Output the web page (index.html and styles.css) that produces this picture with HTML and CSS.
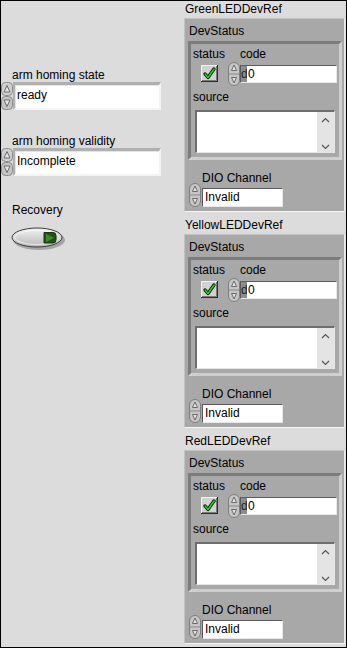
FILE: index.html
```html
<!DOCTYPE html>
<html lang="en">
<head>
<meta charset="UTF-8">
<meta name="viewport" content="width=device-width, initial-scale=1.0">
<title>Front Panel</title>
<link rel="stylesheet" href="styles.css">
</head>
<body>

<div class="panel">
  <div class="left">
    <div class="ctl first">
      <div class="ctl-label">arm homing state</div>
      <div class="ring">
        <svg class="spin spin-ring" width="12" height="28" viewBox="0 0 12 28">
          <rect x="0.5" y="0.5" width="11" height="13" rx="4" fill="#cfcfcf" stroke="#8a8a8a"/>
          <rect x="0.5" y="14.5" width="11" height="13" rx="4" fill="#c4c4c4" stroke="#8a8a8a"/>
          <polygon points="6,3.5 9,10 3,10" fill="#e8e8e8" stroke="#6a6a6a"/>
          <polygon points="3,18 9,18 6,24.5" fill="#e8e8e8" stroke="#6a6a6a"/>
        </svg>
        <div class="ring-field">ready</div>
      </div>
    </div>
    <div class="ctl second">
      <div class="ctl-label">arm homing validity</div>
      <div class="ring">
        <svg class="spin spin-ring" width="12" height="28" viewBox="0 0 12 28">
          <rect x="0.5" y="0.5" width="11" height="13" rx="4" fill="#cfcfcf" stroke="#8a8a8a"/>
          <rect x="0.5" y="14.5" width="11" height="13" rx="4" fill="#c4c4c4" stroke="#8a8a8a"/>
          <polygon points="6,3.5 9,10 3,10" fill="#e8e8e8" stroke="#6a6a6a"/>
          <polygon points="3,18 9,18 6,24.5" fill="#e8e8e8" stroke="#6a6a6a"/>
        </svg>
        <div class="ring-field">Incomplete</div>
      </div>
    </div>
    <div class="ctl third">
      <div class="ctl-label">Recovery</div>
      <svg class="btn" width="56" height="26" viewBox="0 0 56 26">
        <defs>
          <linearGradient id="btnFill" x1="0" y1="0" x2="0" y2="1">
            <stop offset="0" stop-color="#f2f2f2"/>
            <stop offset="1" stop-color="#b8b8b8"/>
          </linearGradient>
        </defs>
        <ellipse cx="28" cy="14" rx="26" ry="10" fill="#a4a4a4"/>
        <ellipse cx="26" cy="11.5" rx="25" ry="9.5" fill="url(#btnFill)" stroke="#3c3c3c"/>
        <ellipse cx="26" cy="11.5" rx="22" ry="7" fill="none" stroke="#ffffff" stroke-opacity="0.6"/>
        <path d="M33 6.5 L42 6.5 Q45 6.5 45 9.5 L45 14 Q45 17 42 17 L33 17 Z" fill="#24501a" stroke="#1a3312"/>
        <polygon points="35,8 43,12 35,16" fill="#3f8a2c"/>
      </svg>
    </div>
  </div>

  <div class="right">
    <div class="devref">
      <div class="devref-title">GreenLEDDevRef</div>
      <div class="cluster">
        <div class="cluster-title">DevStatus</div>
        <div class="frame">
          <div class="status-row">
            <div class="status-col">
              <div class="sub-label">status</div>
              <svg class="check" width="17" height="17" viewBox="0 0 17 17">
                <rect x="0" y="0" width="17" height="17" fill="#2e2e2e"/>
                <rect x="0" y="0" width="16" height="16" fill="#f4f4f4"/>
                <rect x="1" y="1" width="15" height="15" fill="#7a7a7a"/>
                <rect x="1" y="1" width="14" height="14" fill="#d2d2d2"/>
                <path d="M4 9 L7 12.5 L13 4" fill="none" stroke="#000" stroke-width="3.2" stroke-linecap="round" stroke-linejoin="round"/>
                <path d="M4 9 L7 12.5 L13 4" fill="none" stroke="#19e019" stroke-width="1.6" stroke-linecap="round" stroke-linejoin="round"/>
              </svg>
            </div>
            <div class="code-col">
              <div class="sub-label code-label">code</div>
              <div class="num-row">
                <svg class="spin" width="12" height="24" viewBox="0 0 12 24">
                  <rect x="0.5" y="0.5" width="11" height="23" rx="5.5" fill="#c6c6c6" stroke="#7e7e7e"/>
                  <line x1="1" y1="12" x2="11" y2="12" stroke="#8a8a8a"/>
                  <polygon points="6,3 8.5,8.5 3.5,8.5" fill="#e6e6e6" stroke="#6a6a6a"/>
                  <polygon points="3.5,15.5 8.5,15.5 6,21" fill="#e6e6e6" stroke="#6a6a6a"/>
                </svg>
                <div class="num-field code-field"><span class="radix">d</span>0</div>
              </div>
            </div>
          </div>
          <div class="sub-label source-label">source</div>
          <div class="source-box">
            <div class="scroll">
              <svg width="9" height="6" viewBox="0 0 9 6"><polyline points="1,5 4.5,1.5 8,5" fill="none" stroke="#555" stroke-width="1.2"/></svg>
              <svg width="9" height="6" viewBox="0 0 9 6"><polyline points="1,1 4.5,4.5 8,1" fill="none" stroke="#555" stroke-width="1.2"/></svg>
            </div>
          </div>
        </div>
        <div class="dio-label">DIO Channel</div>
        <div class="dio-row">
          <svg class="spin" width="12" height="24" viewBox="0 0 12 24">
            <rect x="0.5" y="0.5" width="11" height="23" rx="5.5" fill="#c6c6c6" stroke="#7e7e7e"/>
            <line x1="1" y1="12" x2="11" y2="12" stroke="#8a8a8a"/>
            <polygon points="6,3 8.5,8.5 3.5,8.5" fill="#e6e6e6" stroke="#6a6a6a"/>
            <polygon points="3.5,15.5 8.5,15.5 6,21" fill="#e6e6e6" stroke="#6a6a6a"/>
          </svg>
          <div class="num-field dio-field">Invalid</div>
        </div>
      </div>
    </div>

    <div class="devref">
      <div class="devref-title">YellowLEDDevRef</div>
      <div class="cluster">
        <div class="cluster-title">DevStatus</div>
        <div class="frame">
          <div class="status-row">
            <div class="status-col">
              <div class="sub-label">status</div>
              <svg class="check" width="17" height="17" viewBox="0 0 17 17">
                <rect x="0" y="0" width="17" height="17" fill="#2e2e2e"/>
                <rect x="0" y="0" width="16" height="16" fill="#f4f4f4"/>
                <rect x="1" y="1" width="15" height="15" fill="#7a7a7a"/>
                <rect x="1" y="1" width="14" height="14" fill="#d2d2d2"/>
                <path d="M4 9 L7 12.5 L13 4" fill="none" stroke="#000" stroke-width="3.2" stroke-linecap="round" stroke-linejoin="round"/>
                <path d="M4 9 L7 12.5 L13 4" fill="none" stroke="#19e019" stroke-width="1.6" stroke-linecap="round" stroke-linejoin="round"/>
              </svg>
            </div>
            <div class="code-col">
              <div class="sub-label code-label">code</div>
              <div class="num-row">
                <svg class="spin" width="12" height="24" viewBox="0 0 12 24">
                  <rect x="0.5" y="0.5" width="11" height="23" rx="5.5" fill="#c6c6c6" stroke="#7e7e7e"/>
                  <line x1="1" y1="12" x2="11" y2="12" stroke="#8a8a8a"/>
                  <polygon points="6,3 8.5,8.5 3.5,8.5" fill="#e6e6e6" stroke="#6a6a6a"/>
                  <polygon points="3.5,15.5 8.5,15.5 6,21" fill="#e6e6e6" stroke="#6a6a6a"/>
                </svg>
                <div class="num-field code-field"><span class="radix">d</span>0</div>
              </div>
            </div>
          </div>
          <div class="sub-label source-label">source</div>
          <div class="source-box">
            <div class="scroll">
              <svg width="9" height="6" viewBox="0 0 9 6"><polyline points="1,5 4.5,1.5 8,5" fill="none" stroke="#555" stroke-width="1.2"/></svg>
              <svg width="9" height="6" viewBox="0 0 9 6"><polyline points="1,1 4.5,4.5 8,1" fill="none" stroke="#555" stroke-width="1.2"/></svg>
            </div>
          </div>
        </div>
        <div class="dio-label">DIO Channel</div>
        <div class="dio-row">
          <svg class="spin" width="12" height="24" viewBox="0 0 12 24">
            <rect x="0.5" y="0.5" width="11" height="23" rx="5.5" fill="#c6c6c6" stroke="#7e7e7e"/>
            <line x1="1" y1="12" x2="11" y2="12" stroke="#8a8a8a"/>
            <polygon points="6,3 8.5,8.5 3.5,8.5" fill="#e6e6e6" stroke="#6a6a6a"/>
            <polygon points="3.5,15.5 8.5,15.5 6,21" fill="#e6e6e6" stroke="#6a6a6a"/>
          </svg>
          <div class="num-field dio-field">Invalid</div>
        </div>
      </div>
    </div>

    <div class="devref">
      <div class="devref-title">RedLEDDevRef</div>
      <div class="cluster">
        <div class="cluster-title">DevStatus</div>
        <div class="frame">
          <div class="status-row">
            <div class="status-col">
              <div class="sub-label">status</div>
              <svg class="check" width="17" height="17" viewBox="0 0 17 17">
                <rect x="0" y="0" width="17" height="17" fill="#2e2e2e"/>
                <rect x="0" y="0" width="16" height="16" fill="#f4f4f4"/>
                <rect x="1" y="1" width="15" height="15" fill="#7a7a7a"/>
                <rect x="1" y="1" width="14" height="14" fill="#d2d2d2"/>
                <path d="M4 9 L7 12.5 L13 4" fill="none" stroke="#000" stroke-width="3.2" stroke-linecap="round" stroke-linejoin="round"/>
                <path d="M4 9 L7 12.5 L13 4" fill="none" stroke="#19e019" stroke-width="1.6" stroke-linecap="round" stroke-linejoin="round"/>
              </svg>
            </div>
            <div class="code-col">
              <div class="sub-label code-label">code</div>
              <div class="num-row">
                <svg class="spin" width="12" height="24" viewBox="0 0 12 24">
                  <rect x="0.5" y="0.5" width="11" height="23" rx="5.5" fill="#c6c6c6" stroke="#7e7e7e"/>
                  <line x1="1" y1="12" x2="11" y2="12" stroke="#8a8a8a"/>
                  <polygon points="6,3 8.5,8.5 3.5,8.5" fill="#e6e6e6" stroke="#6a6a6a"/>
                  <polygon points="3.5,15.5 8.5,15.5 6,21" fill="#e6e6e6" stroke="#6a6a6a"/>
                </svg>
                <div class="num-field code-field"><span class="radix">d</span>0</div>
              </div>
            </div>
          </div>
          <div class="sub-label source-label">source</div>
          <div class="source-box">
            <div class="scroll">
              <svg width="9" height="6" viewBox="0 0 9 6"><polyline points="1,5 4.5,1.5 8,5" fill="none" stroke="#555" stroke-width="1.2"/></svg>
              <svg width="9" height="6" viewBox="0 0 9 6"><polyline points="1,1 4.5,4.5 8,1" fill="none" stroke="#555" stroke-width="1.2"/></svg>
            </div>
          </div>
        </div>
        <div class="dio-label">DIO Channel</div>
        <div class="dio-row">
          <svg class="spin" width="12" height="24" viewBox="0 0 12 24">
            <rect x="0.5" y="0.5" width="11" height="23" rx="5.5" fill="#c6c6c6" stroke="#7e7e7e"/>
            <line x1="1" y1="12" x2="11" y2="12" stroke="#8a8a8a"/>
            <polygon points="6,3 8.5,8.5 3.5,8.5" fill="#e6e6e6" stroke="#6a6a6a"/>
            <polygon points="3.5,15.5 8.5,15.5 6,21" fill="#e6e6e6" stroke="#6a6a6a"/>
          </svg>
          <div class="num-field dio-field">Invalid</div>
        </div>
      </div>
    </div>
  </div>
</div>

</body>
</html>
```

FILE: styles.css
```css
* {
  box-sizing: border-box;
}
body {
  margin: 0;
  font-family: "Liberation Sans", Arial, sans-serif;
  font-size: 12px;
  color: #000;
  background: #dcdcdc;
}
svg {
  display: block;
}
.panel {
  width: 347px;
  height: 648px;
  border: 1px solid #000;
  display: flex;
  background: #dcdcdc;
  overflow: hidden;
}

/* left column */
.left {
  width: 182px;
  padding-top: 67px;
}
.ctl-label {
  line-height: 14px;
  padding-left: 11px;
}
.ctl.second {
  margin-top: 24px;
}
.ctl.third {
  margin-top: 27px;
}
.ring {
  display: flex;
}
.ring-field {
  width: 148px;
  height: 28px;
  background: #fff;
  border-style: solid;
  border-width: 3px 2px 2px 2px;
  border-color: #b0b0b0 #f4f4f4 #f4f4f4 #b0b0b0;
  box-shadow: inset 1px 1px 0 #e4e4e4;
  padding-left: 2px;
  line-height: 20px;
  font-size: 12px;
}
.btn {
  margin: 9px 0 0 10px;
}

/* right column */
.right {
  flex: 1;
}
.devref {
  height: 216px;
}
.devref-title {
  height: 17px;
  line-height: 17px;
  padding-left: 2px;
}
.cluster {
  margin-left: 1px;
  width: 161px;
  height: 194px;
  background: #a8a8a8;
  border: 1px solid;
  border-color: #c2c2c2 #ececec #f6f6f6 #c2c2c2;
  padding-top: 5px;
}
.cluster-title {
  line-height: 14px;
  padding-left: 4px;
}
.frame {
  margin: 3px 0 0 3px;
  width: 154px;
  height: 119px;
  border: 3px solid;
  border-color: #7c7c7c #cfcfcf #cfcfcf #7c7c7c;
  padding: 3px 0 0 2px;
}
.sub-label {
  line-height: 14px;
}
.status-row {
  display: flex;
}
.status-col {
  width: 35px;
}
.check {
  margin: 4px 0 0 8px;
}
.code-label {
  padding-left: 12px;
}
.num-row {
  display: flex;
  align-items: flex-start;
  margin-top: 1px;
}
.num-field {
  background: #fff;
  border-style: solid;
  border-width: 1px;
  border-color: #5c5c5c #e8e8e8 #e8e8e8 #5c5c5c;
  white-space: nowrap;
}
.code-field {
  width: 97px;
  height: 18px;
  margin-top: 3px;
  line-height: 16px;
  display: flex;
}
.radix {
  width: 6px;
  background: #8c8c8c;
  color: #222;
  overflow: hidden;
  margin-right: 1px;
}
.source-label {
  margin-top: 4px;
}
.source-box {
  margin: 6px 0 0 2px;
  width: 140px;
  height: 43px;
  background: #fff;
  border-style: solid;
  border-width: 2px 1px 1px 2px;
  border-color: #6e6e6e #e6e6e6 #e6e6e6 #6e6e6e;
  display: flex;
  justify-content: flex-end;
}
.scroll {
  width: 17px;
  background: #e4e4e4;
  display: flex;
  flex-direction: column;
  justify-content: space-between;
  align-items: center;
  padding: 5px 0 2px;
}
.dio-label {
  margin-top: 11px;
  line-height: 14px;
  padding-left: 17px;
}
.dio-row {
  display: flex;
  align-items: flex-start;
  margin: -2px 0 0 4px;
}
.dio-field {
  width: 81px;
  height: 19px;
  margin: 5px 0 0 1px;
  padding-left: 2px;
  line-height: 17px;
}
```
